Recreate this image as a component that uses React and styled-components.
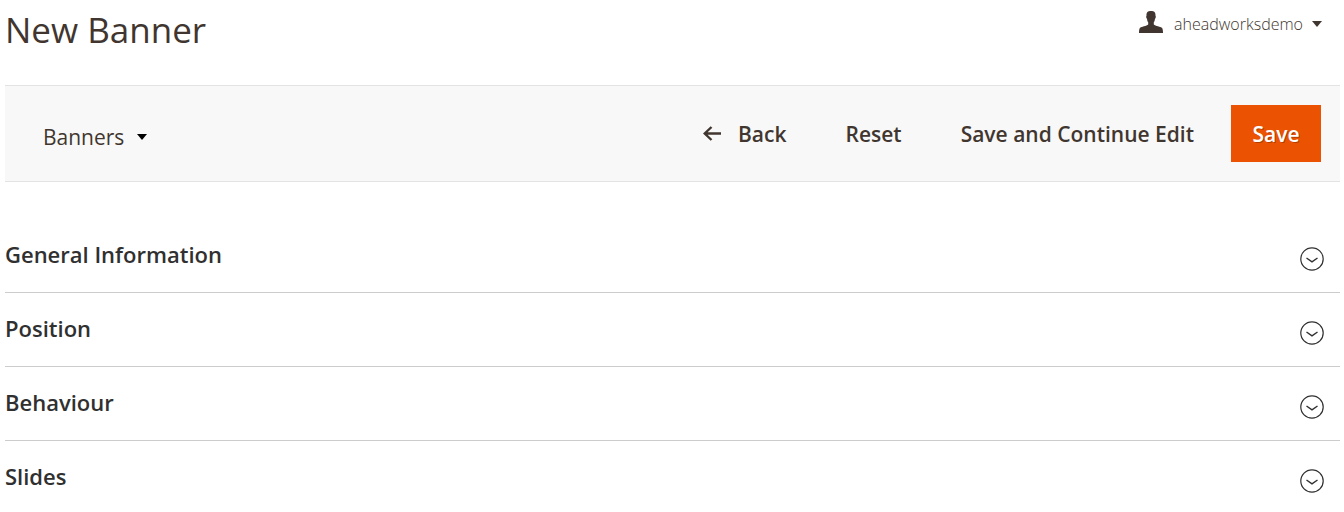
import React, { useState } from "react";
import styled, { createGlobalStyle } from "styled-components";

const sections = ["General Information", "Position", "Behaviour", "Slides"];

const GlobalStyle = createGlobalStyle`
  * {
    box-sizing: border-box;
  }

  body {
    margin: 0;
    background: #fff;
    color: #41362f;
    font-family: "Open Sans", "Noto Sans", sans-serif;
  }

  button {
    padding: 0;
    border: 0;
    background: none;
    color: inherit;
    font: inherit;
    cursor: pointer;
  }
`;

const Page = styled.div`
  padding: 0 4px 0 5px;
`;

const Header = styled.header`
  display: flex;
  justify-content: space-between;
  align-items: flex-start;
  height: 85px;
  padding: 6px 18px 0 0;
`;

const Title = styled.h1`
  margin: 0;
  font-size: 35px;
  font-weight: 400;
  line-height: 48px;
`;

const UserButton = styled.button`
  display: flex;
  align-items: center;
  height: 36px;
  font-size: 16px;
  font-weight: 300;
`;

const UserIcon = styled.svg`
  width: 24px;
  height: 22px;
  margin: 0 11px 4px 0;
  fill: currentColor;
`;

const Caret = styled.span`
  margin-left: ${({ $gap }) => $gap}px;
  border: 5px solid transparent;
  border-top: 6px solid ${({ $color }) => $color || "currentColor"};
  border-bottom: 0;
`;

const Toolbar = styled.div`
  display: flex;
  justify-content: space-between;
  align-items: center;
  height: 97px;
  padding: 0 19px 0 38px;
  border: solid #e3e3e3;
  border-width: 1px 0;
  background: #f8f8f8;
  font-size: 21px;
`;

const SwitcherButton = styled.button`
  display: flex;
  align-items: center;
  padding-top: 6px;
  font-weight: 400;
`;

const Actions = styled.div`
  display: flex;
  align-items: center;
`;

const Action = styled.button`
  display: flex;
  align-items: center;
  height: 57px;
  margin-right: ${({ $last }) => ($last ? 37 : 59)}px;
  font-weight: 600;
`;

const SaveButton = styled.button`
  width: 90px;
  height: 57px;
  background: #eb5202;
  color: #fff;
  font-weight: 600;
  text-shadow: 1px 1px 0 rgba(0, 0, 0, 0.25);
`;

const BackIcon = styled.svg`
  width: 18px;
  height: 16px;
  margin-right: 17px;
  fill: none;
  stroke: currentColor;
  stroke-width: 2.4;
`;

const Sections = styled.main`
  padding-top: 37px;
`;

const Section = styled.h2`
  margin: 0;
  color: #303030;
  font-size: 22px;
  font-weight: 600;

  & + & {
    border-top: 1px solid #ccc;
  }
`;

const SectionButton = styled.button`
  display: flex;
  justify-content: space-between;
  align-items: center;
  width: 100%;
  height: 73px;
  padding: 0 16px 3px 0;
`;

const ToggleIcon = styled.svg`
  width: 24px;
  height: 24px;
  margin-top: 9px;
  fill: none;
  stroke: currentColor;
  transform: ${({ $open }) => ($open ? "rotate(180deg)" : "none")};
`;

export default function App() {
  const [open, setOpen] = useState(null);

  return (
    <>
      <GlobalStyle />
      <Page>
        <Header>
          <Title>New Banner</Title>
          <UserButton type="button">
            <UserIcon viewBox="0 0 24 22" aria-hidden="true">
              <path d="M12 0C8.800 0 7.300 1.300 7.500 4.700C6.900 5 7.200 7.400 8 7.800C8.200 9.500 8.600 10.600 9.200 11.300V13.400C7.700 15.100 2.200 15.500 1 16.700C0.200 17.600 0 20 0 22H24C24 20 23.800 17.600 23 16.700C21.800 15.500 16.300 15.100 14.800 13.400V11.300C15.400 10.600 15.800 9.500 16 7.800C16.800 7.400 17.100 5 16.500 4.700C16.700 1.300 15.200 0 12 0Z" />
            </UserIcon>
            aheadworksdemo
            <Caret $gap={9} />
          </UserButton>
        </Header>

        <Toolbar>
          <SwitcherButton type="button">
            Banners
            <Caret $gap={13} $color="#000" />
          </SwitcherButton>
          <Actions>
            <Action type="button">
              <BackIcon viewBox="0 0 18 16" aria-hidden="true">
                <path d="M18 7.500H2M8.500 1L1.700 7.500L8.500 14" />
              </BackIcon>
              Back
            </Action>
            <Action type="button">Reset</Action>
            <Action type="button" $last>
              Save and Continue Edit
            </Action>
            <SaveButton type="button">Save</SaveButton>
          </Actions>
        </Toolbar>

        <Sections>
          {sections.map((name) => (
            <Section key={name}>
              <SectionButton
                type="button"
                aria-expanded={open === name}
                onClick={() => setOpen(open === name ? null : name)}
              >
                {name}
                <ToggleIcon viewBox="0 0 24 24" $open={open === name} aria-hidden="true">
                  <circle cx="12" cy="12" r="11.2" strokeWidth="1.200" />
                  <path d="M6.500 11L12 14.800L17.500 11" strokeWidth="1.400" />
                </ToggleIcon>
              </SectionButton>
            </Section>
          ))}
        </Sections>
      </Page>
    </>
  );
}
